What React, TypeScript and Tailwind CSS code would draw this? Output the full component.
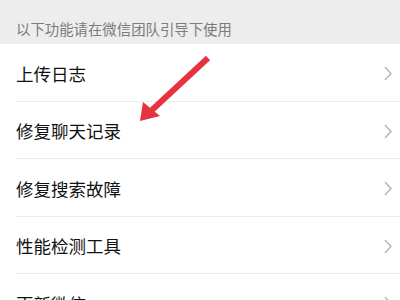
const items = ["上传日志", "修复聊天记录", "修复搜索故障", "性能检测工具", "更新微信"];

function Chevron() {
  return (
    <svg width="8" height="15" viewBox="0 0 8 15" fill="none" className="shrink-0">
      <path d="M1 1l6 6.5L1 14" stroke="#b4b4b4" strokeWidth="1.4" />
    </svg>
  );
}

export default function App() {
  return (
    <div
      className="relative h-[300px] w-[400px] overflow-hidden bg-white"
      style={{ fontFamily: '"Noto Sans CJK SC", "Noto Sans", sans-serif' }}
    >
      <div className="h-[44px] bg-[#ededed] px-4 pt-[19px] text-[14.4px] leading-[20px] text-[#7b7b7b]">
        以下功能请在微信团队引导下使用
      </div>
      {items.map((t) => (
        <div key={t} className="ml-4 flex h-[57.5px] items-center border-b border-[#ececec] pr-2 pt-[3px]">
          <span className="flex-1 text-[17.5px] text-[#111111]">{t}</span>
          <Chevron />
        </div>
      ))}
      <svg className="pointer-events-none absolute left-0 top-0" width="400" height="300">
        <line x1="208" y1="58" x2="152" y2="110" stroke="#e5333f" strokeWidth="6" strokeLinecap="butt" />
        <polygon points="140,121 143,102 160,116" fill="#e5333f" />
      </svg>
    </div>
  );
}
